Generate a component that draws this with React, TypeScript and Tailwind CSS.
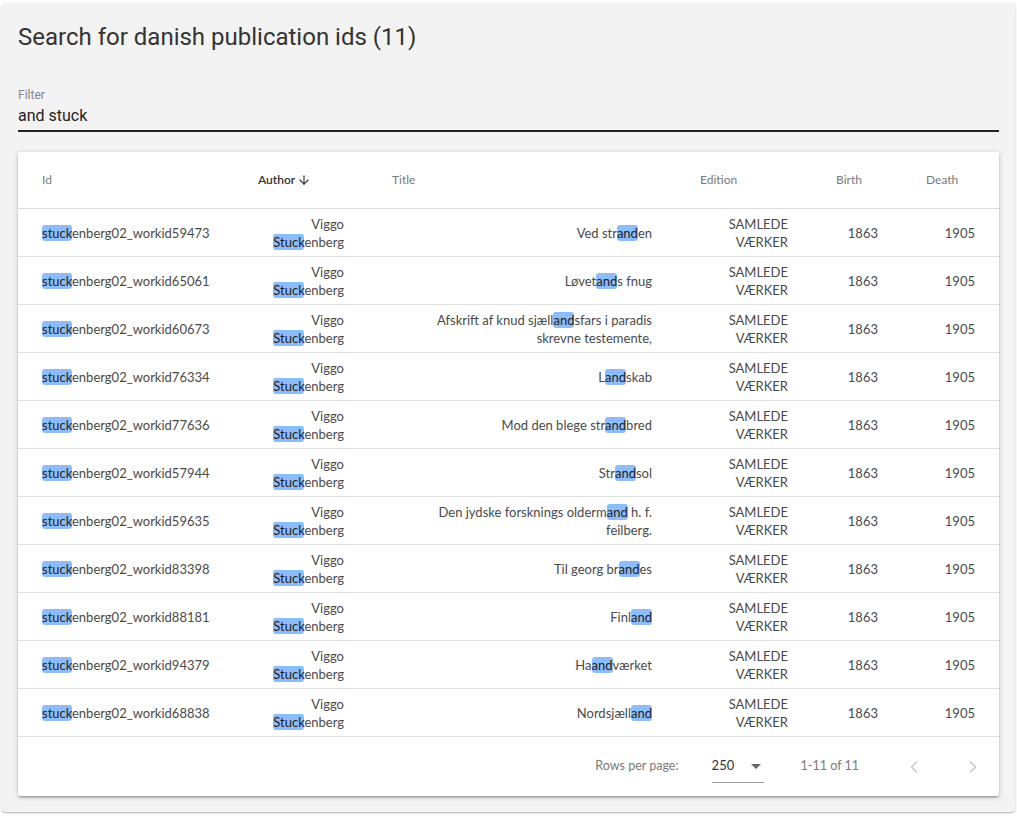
import { ArrowDown, ChevronLeft, ChevronRight } from "lucide-react";

type Row = {
  id: string;
  title: string;
};

const rows: Row[] = [
  { id: "stuckenberg02_workid59473", title: "Ved stranden" },
  { id: "stuckenberg02_workid65061", title: "Løvetands fnug" },
  { id: "stuckenberg02_workid60673", title: "Afskrift af knud sjællandsfars i paradis skrevne testemente," },
  { id: "stuckenberg02_workid76334", title: "Landskab" },
  { id: "stuckenberg02_workid77636", title: "Mod den blege strandbred" },
  { id: "stuckenberg02_workid57944", title: "Strandsol" },
  { id: "stuckenberg02_workid59635", title: "Den jydske forsknings oldermand h. f. feilberg." },
  { id: "stuckenberg02_workid83398", title: "Til georg brandes" },
  { id: "stuckenberg02_workid88181", title: "Finland" },
  { id: "stuckenberg02_workid94379", title: "Haandværket" },
  { id: "stuckenberg02_workid68838", title: "Nordsjælland" },
];

const terms = ["and", "stuck"];

// split text into plain / matched parts for every filter term
function Highlight({ text }: { text: string }) {
  const re = new RegExp(`(${terms.join("|")})`, "gi");
  const parts = text.split(re);
  return (
    <>
      {parts.map((p, i) =>
        terms.includes(p.toLowerCase()) ? (
          <span key={i} className="rounded-[3px] bg-[#8cbcfa] text-[#1f1f1f]">
            {p}
          </span>
        ) : (
          <span key={i}>{p}</span>
        ),
      )}
    </>
  );
}

const cols = "grid grid-cols-[216px_134px_308px_136px_90px_97px]";

export default function App() {
  return (
    <div className="min-h-[816px] bg-white px-[2px] pt-[3px]" style={{ fontFamily: "Lato, 'Noto Sans', sans-serif" }}>
      <div className="h-[809px] rounded-[4px] bg-[#f3f3f3] px-4 pt-[18px] shadow-[0_1px_3px_rgba(0,0,0,0.2),0_1px_1px_rgba(0,0,0,0.14)]">
        <h1 className="text-[24px] leading-8 text-[#333]" style={{ fontFamily: "Roboto, sans-serif" }}>
          Search for danish publication ids (11)
        </h1>

        <div className="mt-[35px] border-b-2 border-[#222] pb-[4px]" style={{ fontFamily: "Roboto, sans-serif" }}>
          <div className="text-[12px] leading-[14px] text-[#888]">Filter</div>
          <div className="mt-[4px] text-[16px] leading-5 text-[#222]">and stuck</div>
        </div>

        <div className="mt-5 rounded-[2px] bg-white shadow-[0_1px_5px_rgba(0,0,0,0.2),0_2px_2px_rgba(0,0,0,0.14),0_3px_1px_-2px_rgba(0,0,0,0.12)]">
          <div className={`${cols} h-[57px] items-center border-b border-[#dcdcdc] text-[12px] text-[#7a7a7a]`}>
            <div className="pl-6">Id</div>
            <div className="flex items-center gap-[2px] pl-6 font-semibold text-[#333]">
              Author
              <ArrowDown size={14} strokeWidth={2} />
            </div>
            <div className="pl-6">Title</div>
            <div className="pl-6">Edition</div>
            <div className="pl-6">Birth</div>
            <div className="pl-6">Death</div>
          </div>

          {rows.map((r) => (
            <div
              key={r.id}
              className={`${cols} h-[48px] items-center border-b border-[#e0e0e0] text-[13px] leading-[18px] text-[#4a4a4a]`}
            >
              <div className="pl-6">
                <Highlight text={r.id} />
              </div>
              <div className="px-6 text-right">
                <Highlight text="Viggo Stuckenberg" />
              </div>
              <div className="px-6 text-right">
                <Highlight text={r.title} />
              </div>
              <div className="px-6 text-right">SAMLEDE VÆRKER</div>
              <div className="px-6 text-right">1863</div>
              <div className="px-6 text-right">1905</div>
            </div>
          ))}

          <div className="flex h-[59px] items-center justify-end pr-[2px] text-[12.5px] text-[#7a7a7a]">
            <span>Rows per page:</span>
            <div className="ml-[33px] flex h-[32px] w-[52px] items-center justify-between border-b border-[#9e9e9e] text-[13px] text-[#333]">
              <span>250</span>
              <svg width="24" height="24" viewBox="0 0 24 24" className="-mr-[4px] fill-[#666]">
                <path d="M7 10l5 5 5-5z" />
              </svg>
            </div>
            <span className="ml-[37px]">1-11 of 11</span>
            <div className="ml-[31px] flex h-12 w-12 items-center justify-center text-[#c4c4c4]">
              <ChevronLeft size={20} strokeWidth={1.5} />
            </div>
            <div className="ml-[11px] flex h-12 w-12 items-center justify-center text-[#c4c4c4]">
              <ChevronRight size={20} strokeWidth={1.5} />
            </div>
          </div>
        </div>
      </div>
    </div>
  );
}
